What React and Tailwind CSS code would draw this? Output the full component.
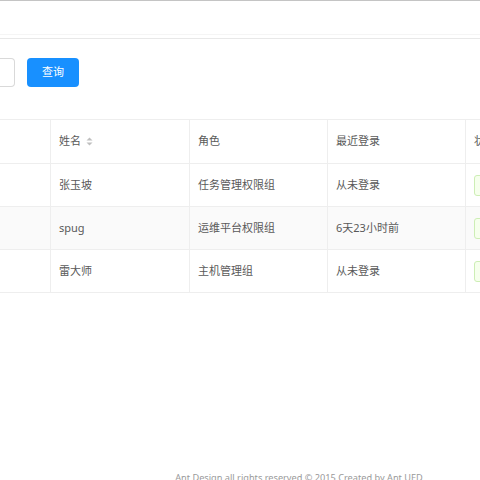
export default function App() {
  const font = { fontFamily: '"Noto Sans", "Noto Sans CJK SC", sans-serif' };
  const rows = [
    { name: "张玉坡", role: "任务管理权限组", last: "从未登录", bg: "bg-white" },
    { name: "spug", role: "运维平台权限组", last: "6天23小时前", bg: "bg-[#fafafa]" },
    { name: "雷大师", role: "主机管理组", last: "从未登录", bg: "bg-white" },
  ];
  const cell = "flex items-center pl-2 border-r border-[#eeeeee] shrink-0";
  return (
    <div className="w-[480px] h-[480px] overflow-hidden bg-white text-[11px] text-[#595959]" style={font}>
      <div className="h-[39px] border-t border-[#c4c4c4] border-b border-b-[#e8e8e8] flex flex-col">
        <div className="h-[33px]"></div>
        <div className="h-px bg-[#f5f5f5]"></div>
      </div>
      <div className="flex items-center gap-3 h-[29px] mt-[19px]">
        <div className="w-[15px] h-[29px] border border-l-0 border-[#d9d9d9] rounded-r-[4px] shrink-0"></div>
        <button className="w-[52px] h-[29px] rounded-[4px] bg-[#1890ff] text-white text-[11px] flex items-center justify-center">查询</button>
      </div>
      <div className="mt-[32px] border-t border-[#eeeeee]">
        <div className="flex h-[44px] border-b border-[#eeeeee] bg-white">
          <div className={`${cell} w-[51px]`}></div>
          <div className={`${cell} w-[139px]`}>
            <span>姓名</span>
            <svg className="ml-[5px]" width="7" height="9" viewBox="0 0 7 9">
              <path d="M3.5 0.5 L6.5 3.5 L0.5 3.5 Z" fill="#bfbfbf" />
              <path d="M3.5 8.5 L6.5 5.5 L0.5 5.5 Z" fill="#bfbfbf" />
            </svg>
          </div>
          <div className={`${cell} w-[138px]`}>角色</div>
          <div className={`${cell} w-[138px]`}>最近登录</div>
          <div className="flex items-center pl-2 shrink-0">状态</div>
        </div>
        {rows.map((r, i) => (
          <div key={i} className={`flex h-[43px] border-b border-[#eeeeee] ${r.bg}`}>
            <div className={`${cell} w-[51px]`}></div>
            <div className={`${cell} w-[139px]`}>{r.name}</div>
            <div className={`${cell} w-[138px]`}>{r.role}</div>
            <div className={`${cell} w-[138px]`}>{r.last}</div>
            <div className="flex items-center pl-2 shrink-0">
              <span className="h-[21px] px-[6px] rounded-[3px] border border-[#cdeeb5] bg-[#f6ffed] text-[#52c41a] text-[10px] leading-[19px]">正常</span>
            </div>
          </div>
        ))}
      </div>
      <div className="mt-[178px] pl-[118px] text-center text-[9.2px] text-[#9a9a9a] leading-[14px]">
        Ant Design all rights reserved © 2015 Created by Ant UED
      </div>
    </div>
  );
}
